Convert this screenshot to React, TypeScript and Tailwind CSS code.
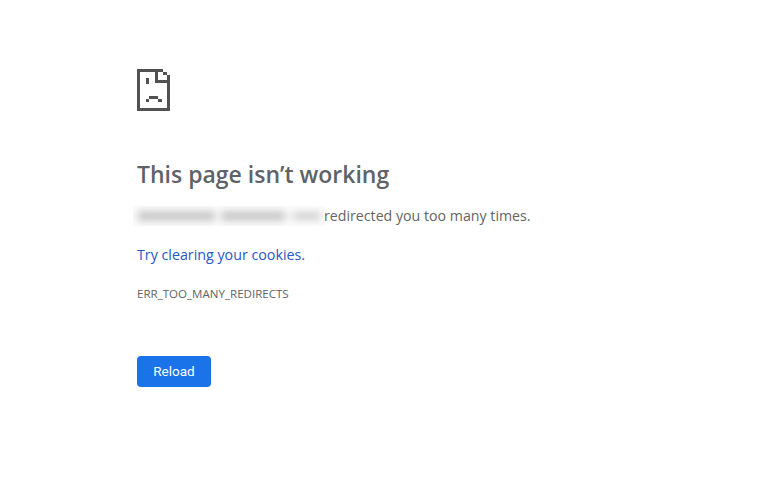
const font = "font-['Open_Sans',sans-serif]";

function SadPage() {
  return (
    <svg width="33" height="42" viewBox="0 0 33 42" fill="#525252" shapeRendering="crispEdges">
      <rect x="0" y="0" width="26" height="3" />
      <rect x="0" y="0" width="3" height="42" />
      <rect x="0" y="39" width="33" height="3" />
      <rect x="30" y="6" width="3" height="36" />
      <rect x="26" y="3" width="4" height="3" />
      <rect x="18" y="0" width="3" height="14" />
      <rect x="18" y="11" width="15" height="3" />
      <rect x="9" y="9" width="3" height="6" />
      <rect x="12" y="27" width="9" height="3" />
      <rect x="9" y="30" width="3" height="3" />
      <rect x="21" y="30" width="4" height="3" />
    </svg>
  );
}

export default function App() {
  return (
    <div className={`w-[760px] h-[480px] bg-white pl-[137px] pt-[69px] overflow-hidden ${font}`}>
      <SadPage />

      <h1 className="mt-[45px] text-[23px] leading-[36px] font-semibold text-[#5f6368]">
        This page isn’t working
      </h1>

      <div className="mt-[12px] -ml-[4px] flex items-center h-[24px] text-[14.2px] text-[#646464]">
        <div className="w-[191px] h-[20px] pl-[5px] flex items-center overflow-hidden bg-[#fbfbfb]">
          <div className="flex gap-[2px] w-full blur-[3.5px]">
            <div className="w-[76px] h-[10px] bg-[#c9c9c9]" />
            <div className="w-[4px] h-[6px] mt-[2px] bg-[#e4e4e4]" />
            <div className="w-[62px] h-[10px] bg-[#c9c9c9]" />
            <div className="w-[6px] h-[6px] mt-[2px] bg-[#e4e4e4]" />
            <div className="w-[26px] h-[8px] mt-[1px] bg-[#d2d2d2]" />
          </div>
        </div>
        <span>redirected you too many times.</span>
      </div>

      <p className="mt-[15px] h-[24px] leading-[24px] text-[14.25px] text-[#2a56c6]">
        Try clearing your cookies.
      </p>

      <p className="mt-[19px] h-[16px] leading-[16px] text-[11.55px] text-[#646464]">
        ERR_TOO_MANY_REDIRECTS
      </p>

      <button className="mt-[54px] block w-[74px] h-[31px] rounded bg-[#1a73e8] text-white text-[13.5px] font-['Roboto',sans-serif] font-normal">
        Reload
      </button>
    </div>
  );
}
